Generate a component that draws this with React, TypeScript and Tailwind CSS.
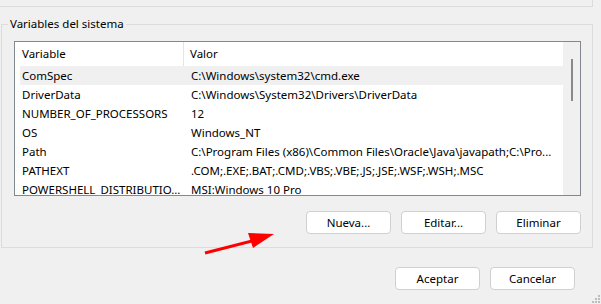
import React from "react";

type EnvVar = { name: string; value: string };

const rows: EnvVar[] = [
  { name: "ComSpec", value: "C:\\Windows\\system32\\cmd.exe" },
  { name: "DriverData", value: "C:\\Windows\\System32\\Drivers\\DriverData" },
  { name: "NUMBER_OF_PROCESSORS", value: "12" },
  { name: "OS", value: "Windows_NT" },
  { name: "Path", value: "C:\\Program Files (x86)\\Common Files\\Oracle\\Java\\javapath;C:\\Pro..." },
  { name: "PATHEXT", value: ".COM;.EXE;.BAT;.CMD;.VBS;.VBE;.JS;.JSE;.WSF;.WSH;.MSC" },
  { name: "POWERSHELL_DISTRIBUTIO...", value: "MSI:Windows 10 Pro" },
];

const Button = ({ label }: { label: string }) => (
  <button className="w-[85px] h-[23px] bg-white border border-[#d0d0d0] rounded-[4px] text-[11.5px] leading-none text-black">
    {label}
  </button>
);

export default function App() {
  return (
    <div className="relative w-[601px] h-[304px] overflow-hidden bg-[#f0f0f0] text-[11.5px] text-black font-['Noto_Sans',sans-serif]">
      {/* bottom edge of the user variables group */}
      <div className="h-[7px] w-[593px] border-b border-r border-[#dcdcdc]" />

      <fieldset className="mt-[9px] ml-[1px] w-[592px] border border-[#dcdcdc] pb-[13px]">
        <legend className="ml-[6px] px-[2px] leading-[16px]">Variables del sistema</legend>

        <div className="mt-[9px] ml-[12px] w-[567px] h-[155px] border border-[#828790] bg-white flex overflow-hidden">
          <div className="w-[548px] pl-[5px]">
            <div className="grid grid-cols-[164px_1fr] h-[24px] items-center">
              <div className="h-full flex items-center pl-[2px] border-r border-[#e5e5e5]">Variable</div>
              <div className="pl-[6px]">Valor</div>
            </div>
            {rows.map((r, i) => (
              <div
                key={r.name}
                className={`grid grid-cols-[164px_1fr] h-[19px] items-center whitespace-nowrap ${i === 0 ? "bg-[#f0f0f0]" : ""}`}
              >
                <div className="pl-[2px]">{r.name}</div>
                <div className="pl-[7px]">{r.value}</div>
              </div>
            ))}
          </div>
          <div className="w-[17px] bg-[#f0f0f0] flex justify-center">
            <div className="mt-[17px] ml-[1px] w-[2px] h-[42px] bg-[#8a8a8a]" />
          </div>
        </div>

        <div className="mt-[15px] mr-[11px] flex justify-end gap-[10px]">
          <Button label="Nueva..." />
          <Button label="Editar..." />
          <Button label="Eliminar" />
        </div>
      </fieldset>

      <div className="mt-[19px] mr-[26px] flex justify-end gap-[10px]">
        <Button label="Aceptar" />
        <Button label="Cancelar" />
      </div>

      {/* red annotation arrow */}
      <svg className="absolute left-[200px] top-[228px]" width="80" height="30" viewBox="200 228 80 30">
        <line x1="205" y1="253" x2="256" y2="240" stroke="#ff0000" strokeWidth="3" />
        <polygon points="248,233 274,234 253,248" fill="#ff0000" />
      </svg>

      {/* resize grip */}
      <svg className="absolute right-0 bottom-0" width="10" height="10" viewBox="0 0 10 10">
        <rect x="7" y="1" width="2" height="2" fill="#bcbcbc" />
        <rect x="4" y="4" width="2" height="2" fill="#bcbcbc" />
        <rect x="7" y="4" width="2" height="2" fill="#bcbcbc" />
        <rect x="1" y="7" width="2" height="2" fill="#bcbcbc" />
        <rect x="4" y="7" width="2" height="2" fill="#bcbcbc" />
        <rect x="7" y="7" width="2" height="2" fill="#bcbcbc" />
      </svg>
    </div>
  );
}
